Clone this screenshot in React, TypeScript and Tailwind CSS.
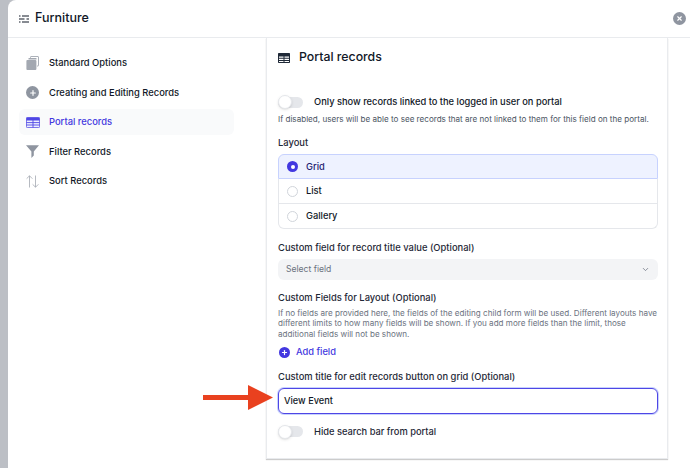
import { ChevronDown, Plus, X } from 'lucide-react';

const navItems = [
  { label: 'Standard Options', icon: 'copy' },
  { label: 'Creating and Editing Records', icon: 'plus' },
  { label: 'Portal records', icon: 'table', active: true },
  { label: 'Filter Records', icon: 'filter' },
  { label: 'Sort Records', icon: 'sort' },
];

function NavIcon({ name }: { name: string }) {
  if (name === 'copy') {
    return (
      <svg viewBox="0 0 13 14" className="h-[14px] w-[13px]" fill="none">
        <path d="M4.500 1.800V1c0-.3.2-.5.5-.5h7c.3 0 .5.2.5.5v8.500c0 .3-.2.5-.5.5h-1" stroke="#a3a8b1" strokeWidth="0.9" />
        <path d="M2.500 2.600c0-.4.3-.7.7-.7h6.600c.4 0 .7.3.7.7V3.400h-8z" fill="#a3a8b1" />
        <rect x="0.400" y="4" width="10" height="10" rx="1" fill="#a3a8b1" />
      </svg>
    );
  }
  if (name === 'plus') {
    return (
      <span className="flex h-[13px] w-[13px] items-center justify-center rounded-full bg-[#8f95a0]">
        <Plus size={8} strokeWidth={3.5} className="text-white" />
      </span>
    );
  }
  if (name === 'table') {
    return (
      <svg viewBox="0 0 14 11" className="h-[11px] w-[14px]" fill="none">
        <rect x="0.400" y="0.400" width="13.200" height="10.200" rx="1" fill="#eef0fe" stroke="#4f46e5" strokeWidth="0.800" />
        <path d="M.4 1.400c0-.6.4-1 1-1h11.200c.6 0 1 .4 1 1v2H.4z" fill="#4f46e5" />
        <path d="M.4 5.600h13.200M.4 8h13.200M7 3v7.600" stroke="#4f46e5" strokeWidth="0.900" />
      </svg>
    );
  }
  if (name === 'filter') {
    return (
      <svg viewBox="0 0 13 13" className="h-[13px] w-[13px]">
        <path d="M0 .3h13L7.800 6.400v4.200L5.400 13V6.400z" fill="#8f95a0" />
      </svg>
    );
  }
  return (
    <svg viewBox="0 0 13 13" className="h-[13px] w-[13px]" fill="none" stroke="#a3a8b1" strokeWidth="0.800">
      <path d="M3.500 12.500V.8M.6 3.700 3.500.8l2.900 2.900" />
      <path d="M9.500.5v11.700M6.600 9.300l2.900 2.900 2.900-2.900" />
    </svg>
  );
}

function Toggle() {
  return (
    <span className="relative block h-[11px] w-[25px] shrink-0 rounded-full bg-[#e5e7eb]">
      <span className="absolute left-0 top-[-1.500px] h-[14px] w-[14px] rounded-full border border-[#e5e7eb] bg-white shadow-sm" />
    </span>
  );
}

function RadioRow({ label, checked }: { label: string; checked?: boolean }) {
  return (
    <div
      className={
        checked
          ? 'flex h-[25px] items-center gap-[8px] rounded-t-md border border-[#c7d2fe] bg-[#eef2ff] px-[8px]'
          : 'flex h-[25px] items-center gap-[8px] border-x border-b border-[#e5e7eb] px-[8px] last:rounded-b-md'
      }
    >
      {checked ? (
        <span className="flex h-[11px] w-[11px] items-center justify-center rounded-full bg-[#4338e0]">
          <span className="h-[4px] w-[4px] rounded-full bg-white" />
        </span>
      ) : (
        <span className="h-[11px] w-[11px] rounded-full border border-[#d1d5db] bg-white" />
      )}
      <span className={checked ? 'text-[9.300px] font-medium text-[#1e1b70]' : 'text-[9.300px] font-medium text-[#111827]'}>
        {label}
      </span>
    </div>
  );
}

export default function App() {
  return (
    <div className="relative h-[468px] w-[690px] overflow-hidden bg-[#bcbfc5] pl-[8px] font-['Inter',sans-serif]">
      <div className="h-full rounded-tl-[8px] bg-white">
        <header className="relative flex h-[38px] items-center gap-[6px] border-b border-[#e9ebee] pl-[11px]">
          <svg viewBox="0 0 10 8" className="h-[8px] w-[10px]" fill="none" stroke="#111827" strokeWidth="1.200">
            <path d="M3 1h7M0 1h1.500M0 4h5.500M7.500 4H10M3 7h7M0 7h1.500" />
          </svg>
          <h1 className="text-[12.500px] font-medium text-[#111827]">Furniture</h1>
          <button
            type="button"
            className="absolute left-[665px] top-[12px] flex h-[13px] w-[13px] items-center justify-center rounded-full bg-[#8f95a0]"
          >
            <X size={7} strokeWidth={4} className="text-white" />
          </button>
        </header>

        <div className="flex">
          <nav className="ml-[11px] mt-[12px] flex w-[215px] flex-col gap-[3.600px]">
            {navItems.map((item) => (
              <div
                key={item.label}
                className={
                  item.active
                    ? 'flex h-[26px] items-center rounded-md bg-[#f9fafb] text-[#4338e0]'
                    : 'flex h-[26px] items-center rounded-md text-[#111827]'
                }
              >
                <span className="flex w-[30px] justify-center pr-[3px]">
                  <NavIcon name={item.icon} />
                </span>
                <span className="text-[9.400px] font-medium">{item.label}</span>
              </div>
            ))}
          </nav>

          <main className="ml-[32px] h-[421px] w-[402px] border-x border-b border-[#e9ebee] px-[11px] shadow-[0_1px_1px_rgba(0,0,0,0.2)]">
            <div className="flex h-[39px] items-center gap-[9px]">
              <svg viewBox="0 0 12 10" className="h-[10px] w-[12px]">
                <path d="M0 1c0-.6.4-1 1-1h10c.6 0 1 .4 1 1v8c0 .6-.4 1-1 1H1c-.6 0-1-.4-1-1z" fill="#1f2937" />
                <path d="M1 3.400h4.500v1.400H1zM6.500 3.400H11v1.400H6.500zM1 5.800h4.500v1.200H1zM6.500 5.800H11v1.200H6.500zM1 8h4.500v1H1zM6.500 8H11v1H6.500z" fill="#fff" />
              </svg>
              <h2 className="text-[12.300px] font-medium text-[#111827]">Portal records</h2>
            </div>

            <div className="mt-[18px] flex h-[14px] items-center gap-[11px]">
              <Toggle />
              <span className="text-[9.300px] font-medium text-[#111827]">Only show records linked to the logged in user on portal</span>
            </div>
            <p className="mt-[4px] whitespace-nowrap text-[8.100px] leading-[13px] text-[#4b5563]">
              If disabled, users will be able to see records that are not linked to them for this field on the portal.
            </p>

            <div className="mt-[10px] text-[9.400px] font-medium leading-[14px] text-[#1f2937]">Layout</div>
            <div className="mt-[4px] w-[380px]">
              <RadioRow label="Grid" checked />
              <RadioRow label="List" />
              <RadioRow label="Gallery" />
            </div>

            <div className="mt-[11.500px] text-[9.400px] font-medium leading-[14px] text-[#1f2937]">
              Custom field for record title value (Optional)
            </div>
            <div className="mt-[4.500px] flex h-[21px] w-[380px] items-center justify-between rounded-md bg-[#f3f4f6] px-[8px] text-[8.600px] text-[#6b7280]">
              <span>Select field</span>
              <ChevronDown size={9} strokeWidth={2} />
            </div>

            <div className="mt-[11px] text-[9.400px] font-medium leading-[14px] text-[#1f2937]">Custom Fields for Layout (Optional)</div>
            <p className="mt-[2.700px] w-[382px] text-[8.100px] leading-[10.700px] text-[#6b7280]">
              If no fields are provided here, the fields of the editing child form will be used. Different layouts have different limits to how many fields will be shown. If you add more fields than the limit, those additional fields will not be shown.
            </p>

            <div className="mt-[5.500px] flex h-[14px] items-center gap-[6px] pl-[1px]">
              <span className="flex h-[11px] w-[11px] items-center justify-center rounded-full bg-[#4338e0]">
                <Plus size={7} strokeWidth={4} className="text-white" />
              </span>
              <span className="text-[9.300px] font-medium text-[#4338e0]">Add field</span>
            </div>

            <div className="mt-[10.500px] text-[9.400px] font-medium leading-[14px] text-[#1f2937]">
              Custom title for edit records button on grid (Optional)
            </div>
            <div className="mt-[4px] flex h-[26px] w-[380px] items-center rounded-md border border-[#4f46e5] px-[5px] text-[9.200px] font-medium text-[#111827] ring-1 ring-[#c7d2fe]">
              View Event
            </div>

            <div className="mt-[11px] flex h-[14px] items-center gap-[11px]">
              <Toggle />
              <span className="text-[9.300px] font-medium text-[#1f2937]">Hide search bar from portal</span>
            </div>
          </main>
        </div>
      </div>

      <svg viewBox="0 0 70 25" className="absolute left-[203px] top-[385px] h-[25px] w-[70px]">
        <path d="M0 10h45V0l25 12.500L45 25V15H0z" fill="#e9411f" />
      </svg>
    </div>
  );
}
